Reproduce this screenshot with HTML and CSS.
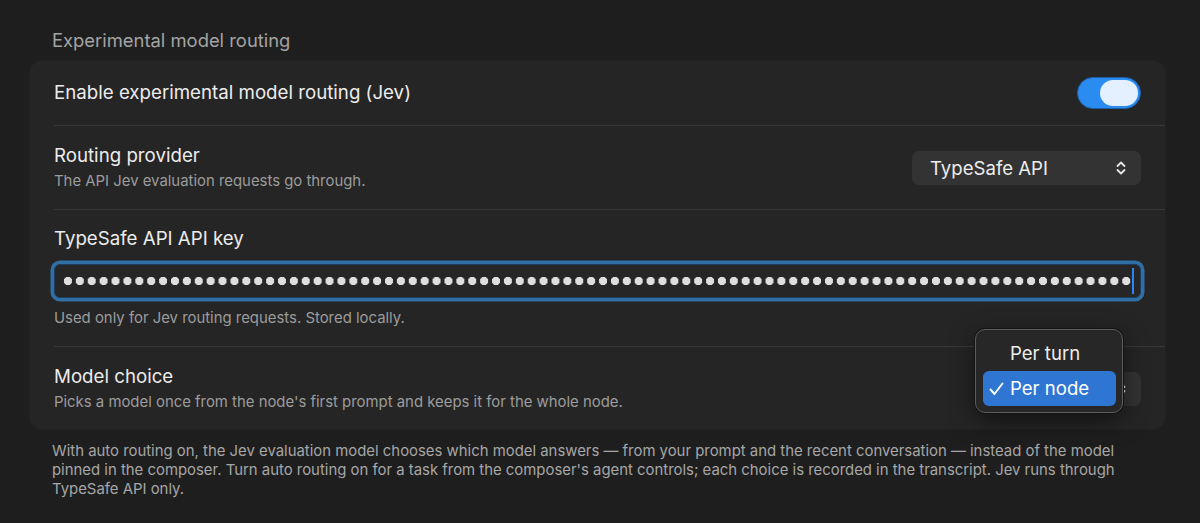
FILE: index.html
```html
<!DOCTYPE html>
<html>
<head>
<meta charset="utf-8">
<link rel="stylesheet" href="styles.css">
</head>
<body>
<div class="page">
  <div class="section-title">Experimental model routing</div>
  <div class="card">
    <div class="row row-toggle">
      <div class="label">Enable experimental model routing (Jev)</div>
      <div class="toggle"><div class="thumb"></div></div>
    </div>
    <div class="row row-split">
      <div class="text">
        <div class="label">Routing provider</div>
        <div class="sub">The API Jev evaluation requests go through.</div>
      </div>
      <div class="select">
        <span>TypeSafe API</span>
        <svg class="chev" width="10" height="16" viewBox="0 0 10 16"><path d="M1.5 6 L5 2.5 L8.5 6 M1.5 10 L5 13.5 L8.5 10" fill="none" stroke="#e6e6e6" stroke-width="1.8" stroke-linecap="round" stroke-linejoin="round"/></svg>
      </div>
    </div>
    <div class="row row-key">
      <div class="label">TypeSafe API API key</div>
      <div class="field"><span class="dots" aria-label="password"></span><span class="caret"></span></div>
      <div class="sub help">Used only for Jev routing requests. Stored locally.</div>
    </div>
    <div class="row row-split row-last">
      <div class="text">
        <div class="label">Model choice</div>
        <div class="sub">Picks a model once from the node's first prompt and keeps it for the whole node.</div>
      </div>
      <div class="select-wrap">
        <div class="select select-small">
          <span></span>
          <svg class="chev" width="10" height="16" viewBox="0 0 10 16"><path d="M1.5 6 L5 2.5 L8.5 6 M1.5 10 L5 13.5 L8.5 10" fill="none" stroke="#e6e6e6" stroke-width="1.8" stroke-linecap="round" stroke-linejoin="round"/></svg>
        </div>
        <div class="menu">
          <div class="item">Per turn</div>
          <div class="item active"><svg class="check" width="15" height="14" viewBox="0 0 15 14"><path d="M1.5 7.5 L5.5 12 L13.5 1.5" fill="none" stroke="#ffffff" stroke-width="1.9" stroke-linecap="round" stroke-linejoin="round"/></svg>Per node</div>
        </div>
      </div>
    </div>
  </div>
  <p class="footer">With auto routing on, the Jev evaluation model chooses which model answers — from your prompt and the recent conversation — instead of the model pinned in the composer. Turn auto routing on for a task from the composer's agent controls; each choice is recorded in the transcript. Jev runs through TypeSafe API only.</p>
</div>
</body>
</html>
```

FILE: styles.css
```css
html, body {
  margin: 0;
  padding: 0;
  background: #1e1e1e;
}
body {
  font-family: Inter, "Noto Sans", sans-serif;
  color: #e8e8e8;
  -webkit-font-smoothing: antialiased;
}
.page {
  padding: 29px 35px 0 30px;
}
.section-title {
  margin-left: 22px;
  font-size: 18.4px;
  line-height: 22px;
  color: #a3a3a3;
}
.card {
  margin-top: 10px;
  background: #252525;
  border-radius: 12px;
  box-shadow: 0 0 0 1px rgba(255,255,255,0.02);
}
.row {
  margin-left: 24px;
  padding-right: 24px;
  border-top: 1px solid #383838;
}
.row-toggle {
  border-top: none;
  height: 64px;
  display: flex;
  align-items: center;
  justify-content: space-between;
}
.label {
  font-size: 18.7px;
  line-height: 22px;
  color: #ececec;
}
.sub {
  font-size: 14.9px;
  line-height: 18px;
  color: #9c9c9c;
  margin-top: 5px;
}
.toggle {
  width: 64px;
  height: 32px;
  border-radius: 16px;
  background: #2a8cf0;
  box-sizing: border-box;
  border: 1px solid #1f5fa6;
  display: flex;
  align-items: center;
  justify-content: flex-end;
  padding-right: 2px;
}
.thumb {
  width: 38px;
  height: 26px;
  border-radius: 13px;
  background: #e4f0ff;
}
.row-split {
  display: flex;
  align-items: center;
  justify-content: space-between;
  padding-top: 19px;
  padding-bottom: 19px;
}
.row-last {
  padding-bottom: 18px;
}
.select {
  width: 229px;
  height: 34px;
  box-sizing: border-box;
  background: #333333;
  border-radius: 7px;
  display: flex;
  align-items: center;
  justify-content: space-between;
  padding: 0 15px 0 18px;
  font-size: 18.6px;
  color: #ededed;
}
.select-small {
  width: 140px;
}
.chev {
  display: block;
}
.row-key {
  padding-top: 18px;
  padding-bottom: 19px;
}
.field {
  margin-top: 14px;
  height: 34px;
  box-sizing: border-box;
  background: #262626;
  border: 1px solid #1d3f5d;
  border-radius: 6px;
  box-shadow: 0 0 0 3.5px #306fa3;
  display: flex;
  align-items: center;
  padding-left: 7px;
}
.dots {
  display: block;
  width: 1071px;
  height: 12px;
  background-image: radial-gradient(circle at center, #dedede 3.8px, rgba(222,222,222,0) 4.5px);
  background-size: 11.9px 12px;
  background-repeat: repeat-x;
}
.caret {
  display: block;
  width: 2px;
  height: 26px;
  margin-left: -1px;
  background: #2f83f2;
}
.help {
  margin-top: 11px;
}
.select-wrap {
  position: relative;
}
.menu {
  position: absolute;
  left: -26px;
  top: -43px;
  width: 148px;
  height: 84px;
  box-sizing: border-box;
  padding: 6px 6px 6px 7px;
  background: #272727;
  border: 1px solid #5c5c5c;
  border-radius: 10px;
  box-shadow: 0 0 0 1px #141414, 0 8px 24px rgba(0,0,0,0.5);
}
.item {
  height: 35px;
  display: flex;
  align-items: center;
  padding-left: 27px;
  font-size: 18.6px;
  color: #ededed;
  border-radius: 6px;
  position: relative;
}
.item.active {
  background: #2f76d2;
  color: #ffffff;
}
.check {
  position: absolute;
  left: 6px;
  top: 11px;
}
.footer {
  margin: 13px 0 0 22px;
  width: 1080px;
  font-size: 14.9px;
  line-height: 19px;
  color: #a6a6a6;
}
```
